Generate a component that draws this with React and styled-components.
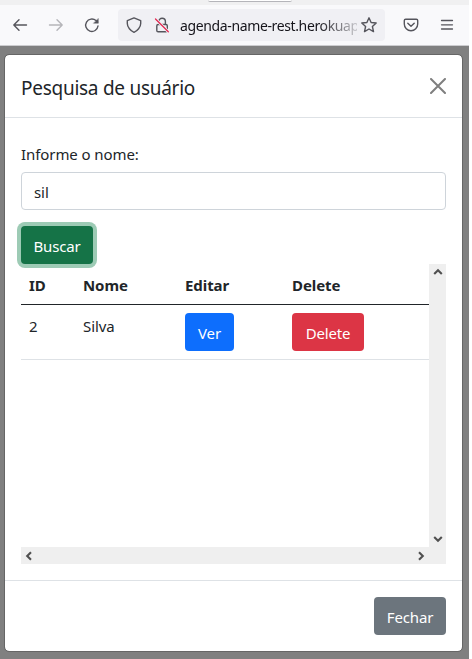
import React from "react";
import styled, { createGlobalStyle } from "styled-components";

const GlobalStyle = createGlobalStyle`
  * { box-sizing: border-box; }
  body {
    margin: 0;
    background: #fff;
    font-family: "Noto Sans", sans-serif;
    font-size: 15px;
    line-height: 24px;
    letter-spacing: -0.08px;
    color: #212529;
    overflow: hidden;
  }
  button, input { font: inherit; letter-spacing: inherit; }
`;

const Window = styled.div`
  width: 469px;
  height: 659px;
  display: flex;
  flex-direction: column;
  background: #808080;
`;

const TabStrip = styled.div`
  height: 5px;
  flex: none;
  background: #f0f0f1;
  padding-left: 208px;
`;

const ActiveTab = styled.div`
  width: 84px;
  height: 2px;
  background: #fff;
  border-bottom: 1px solid #b5b5ba;
  border-radius: 0 0 4px 4px;
`;

const Toolbar = styled.div`
  height: 41px;
  flex: none;
  display: flex;
  align-items: center;
  background: #f9f9fb;
  border-bottom: 1px solid #cccccf;
`;

const ToolButton = styled.span`
  display: flex;
  justify-content: center;
  width: 36px;
  flex: none;
  color: ${(p) => (p.$muted ? "#b5b5b9" : "#55555c")};
`;

const NavGroup = styled.div`
  display: flex;
  width: 118px;
  padding-left: 2px;
`;

const ActionGroup = styled.div`
  display: flex;
  margin-left: 8px;
`;

const AddressBar = styled.div`
  display: flex;
  align-items: center;
  width: 267px;
  height: 32px;
  background: #f0f0f4;
  border-radius: 4px;
  padding: 0 8px;
  color: #55555c;
`;

const Address = styled.span`
  width: 177px;
  flex: none;
  margin-left: 10px;
  margin-right: 4px;
  padding-top: 2px;
  white-space: nowrap;
  font-size: 14px;
  letter-spacing: -0.37px;
  color: #15141a;
  mask-image: linear-gradient(to right, #000 138px, rgba(0, 0, 0, 0.2) 176px);
`;

const LockSlot = styled.span`
  display: flex;
  margin-left: 12px;
`;

const Dialog = styled.div`
  display: flex;
  flex-direction: column;
  width: 459px;
  height: 598px;
  margin: 8px 0 0 4px;
  background: #fff;
  background-clip: padding-box;
  border: 1px solid #666;
  border-radius: 5px;
`;

const DialogHeader = styled.header`
  display: flex;
  justify-content: space-between;
  height: 63px;
  padding: 16px;
  border-bottom: 1px solid #dee2e6;
`;

const Title = styled.h5`
  margin: 2px 0 0;
  font-size: 19px;
  font-weight: 400;
  line-height: 30px;
  letter-spacing: -0.27px;
`;

const CloseButton = styled.button`
  display: flex;
  width: 16px;
  height: 16px;
  margin-top: 7px;
  padding: 0;
  border: 0;
  background: none;
  color: #7f7f7f;
`;

const DialogBody = styled.main`
  height: 462px;
  padding: 24px 16px 16px;
`;

const Label = styled.label`
  display: block;
  height: 30px;
  line-height: 25px;
`;

const TextInput = styled.input`
  display: block;
  width: 100%;
  height: 38px;
  padding: 7px 12px 5px;
  border: 1px solid #ced4da;
  border-radius: 4px;
  color: #212529;
  outline: 0;
`;

const tones = {
  success: "#157347",
  primary: "#0d6efd",
  danger: "#dc3545",
  secondary: "#6c757d",
};

const Button = styled.button`
  display: block;
  width: ${(p) => p.$width}px;
  height: 38px;
  padding: 1px 0 0;
  border: 0;
  border-radius: 4px;
  background: ${(p) => tones[p.$tone]};
  color: #fff;
  text-align: center;
  white-space: nowrap;
  letter-spacing: -0.15px;
  box-shadow: ${(p) => (p.$focused ? "0 0 0 4px #9dcbb5" : "none")};
`;

const SearchAction = styled.div`
  padding-top: 16px;
`;

const ScrollPane = styled.div`
  display: grid;
  grid-template-columns: 1fr 17px;
  grid-template-rows: 1fr 17px;
  height: 300px;
`;

const Track = styled.div`
  display: flex;
  flex-direction: ${(p) => (p.$vertical ? "column" : "row")};
  justify-content: space-between;
  align-items: center;
  padding: ${(p) => (p.$vertical ? "3px 0" : "0 3px")};
  background: #efefef;
  color: #505050;
`;

const Table = styled.table`
  align-self: start;
  width: 408px;
  table-layout: fixed;
  border-collapse: separate;
  border-spacing: 0;
`;

const HeadCell = styled.th`
  width: ${(p) => p.$width}px;
  height: 41px;
  padding: 1px 8px 0;
  border-bottom: 1px solid #212529;
  text-align: left;
  font-weight: 700;
`;

const Cell = styled.td`
  height: 55px;
  padding: 8px;
  vertical-align: top;
  border-bottom: 1px solid #dee2e6;
  line-height: 26px;
`;

const DialogFooter = styled.footer`
  display: flex;
  justify-content: flex-end;
  padding: 16px;
  border-top: 1px solid #dee2e6;
`;

const Icon = ({ size = 16, width = 1.4, children }) => (
  <svg width={size} height={size} viewBox="0 0 16 16" fill="none" stroke="currentColor" strokeWidth={width} strokeLinecap="round" strokeLinejoin="round">
    {children}
  </svg>
);

const chevrons = {
  up: "M1.2 7 5 3.2 8.8 7",
  down: "M1.2 3 5 6.8 8.8 3",
  left: "M7 1.2 3.2 5 7 8.8",
  right: "M3 1.2 6.8 5 3 8.8",
};

const Chevron = ({ to }) => (
  <svg width="10" height="10" viewBox="0 0 10 10" fill="none" stroke="currentColor" strokeWidth="2.1">
    <path d={chevrons[to]} />
  </svg>
);

const users = [{ id: 2, name: "Silva" }];

export default function App() {
  return (
    <Window>
      <GlobalStyle />
      <TabStrip><ActiveTab /></TabStrip>
      <Toolbar>
        <NavGroup>
          <ToolButton><Icon><path d="M14.5 8H1.8M7 2.8 1.8 8 7 13.2" /></Icon></ToolButton>
          <ToolButton $muted><Icon><path d="M1.5 8h12.7M9 2.8 14.2 8 9 13.2" /></Icon></ToolButton>
          <ToolButton>
            <Icon><path d="M14 9A6.2 6.2 0 1 1 12 3.6l1.6 1.5" /><path d="M14.3 1.7v4.6H9.7z" fill="currentColor" strokeWidth="0.4" /></Icon>
          </ToolButton>
        </NavGroup>
        <AddressBar>
          <Icon><path d="M8 .9 1.3 3.6v2.9c0 3.8 3.3 7.4 6.7 8.8 3.4-1.4 6.7-5 6.7-8.8V3.6z" /></Icon>
          <LockSlot>
            <Icon>
              <rect x="2.8" y="7.5" width="10.5" height="7.2" rx="1.3" />
              <path d="M4.8 7.3V4.5a3.3 3.3 0 0 1 6.6 0v2.8" />
              <path d="m1.5 2 12.8 12.8" stroke="#f0f0f4" strokeWidth="3" />
              <path d="m1.5 2 12.8 12.8" stroke="#e22850" strokeWidth="1.3" />
            </Icon>
          </LockSlot>
          <Address>agenda-name-rest.herokuap</Address>
          <Icon><path d="m8 .8 2.1 4.7 5.1.5-3.8 3.5 1.1 5.1L8 12l-4.5 2.6 1.1-5.1L.8 6l5.1-.5z" /></Icon>
        </AddressBar>
        <ActionGroup>
          <ToolButton>
            <Icon><path d="M2.6 2.3h10.8c.8 0 1.3.5 1.3 1.3V7a6.7 6.7 0 0 1-13.4 0V3.6c0-.8.5-1.3 1.3-1.3z" /><path d="M4.8 6.2 8 9.3l3.2-3.1" /></Icon>
          </ToolButton>
          <ToolButton><Icon width={1.3}><path d="M2.5 3.5h11M2.5 7.8h11M2.5 12h11" /></Icon></ToolButton>
        </ActionGroup>
      </Toolbar>
      <Dialog>
        <DialogHeader>
          <Title>Pesquisa de usuário</Title>
          <CloseButton aria-label="Fechar">
            <Icon width={2}><path d="m1 1 14 14M15 1 1 15" /></Icon>
          </CloseButton>
        </DialogHeader>
        <DialogBody>
          <Label htmlFor="nome">Informe o nome:</Label>
          <TextInput id="nome" defaultValue="sil" />
          <SearchAction><Button $tone="success" $width={72} $focused>Buscar</Button></SearchAction>
          <ScrollPane>
            <Table>
              <thead>
                <tr>
                  <HeadCell $width={54}>ID</HeadCell>
                  <HeadCell $width={102}>Nome</HeadCell>
                  <HeadCell $width={107}>Editar</HeadCell>
                  <HeadCell $width={145}>Delete</HeadCell>
                </tr>
              </thead>
              <tbody>
                {users.map((u) => (
                  <tr key={u.id}>
                    <Cell>{u.id}</Cell>
                    <Cell>{u.name}</Cell>
                    <Cell><Button $tone="primary" $width={49}>Ver</Button></Cell>
                    <Cell><Button $tone="danger" $width={72}>Delete</Button></Cell>
                  </tr>
                ))}
              </tbody>
            </Table>
            <Track $vertical><Chevron to="up" /><Chevron to="down" /></Track>
            <Track><Chevron to="left" /><Chevron to="right" /></Track>
            <Track />
          </ScrollPane>
        </DialogBody>
        <DialogFooter><Button $tone="secondary" $width={72}>Fechar</Button></DialogFooter>
      </Dialog>
    </Window>
  );
}
